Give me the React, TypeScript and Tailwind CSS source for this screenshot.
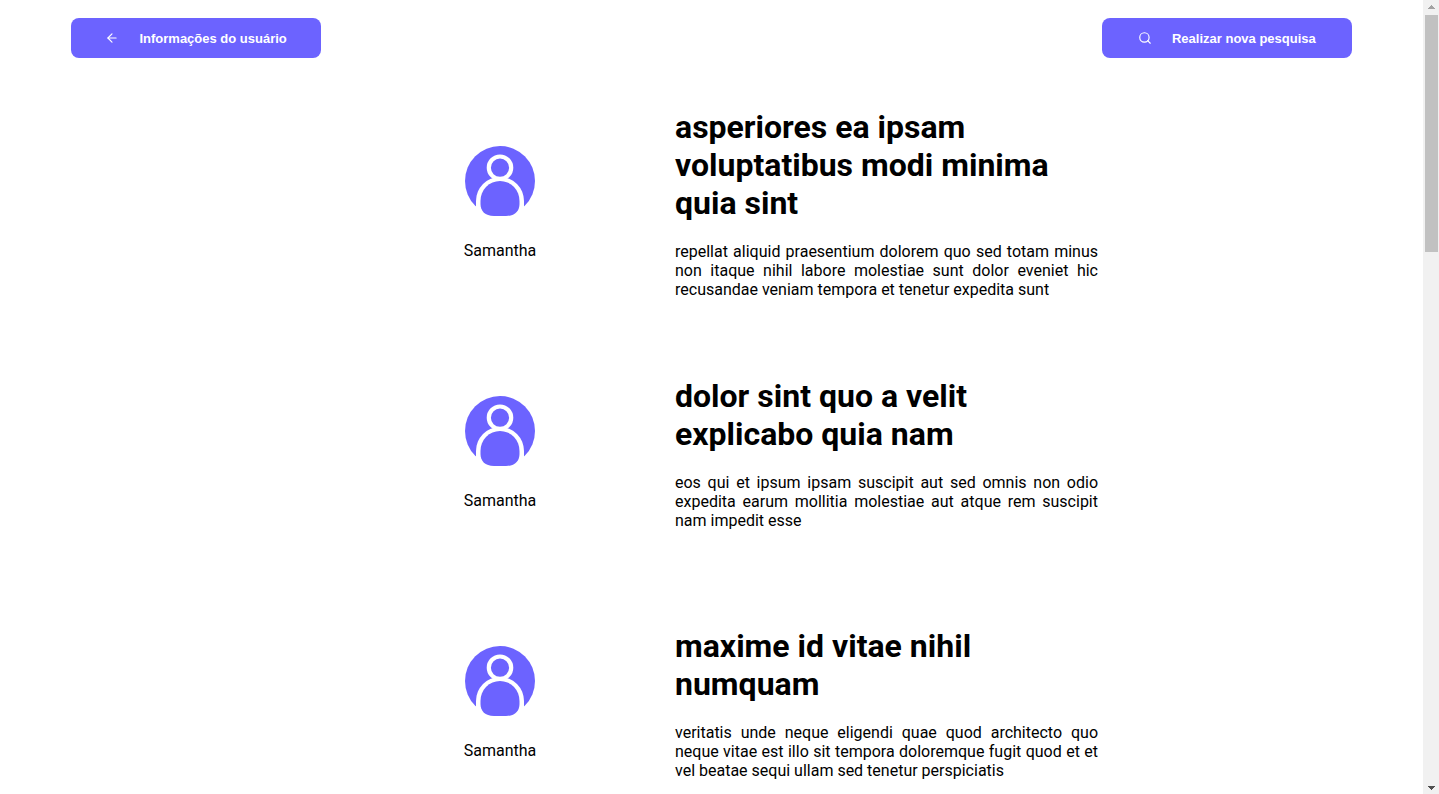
import type { ReactNode } from "react";
import { FiArrowLeft, FiSearch } from "react-icons/fi";

type Post = { title: string; author: string; body: string };

const posts: Post[] = [
  {
    title: "asperiores ea ipsam voluptatibus modi minima quia sint",
    author: "Samantha",
    body: "repellat aliquid praesentium dolorem quo sed totam minus non itaque nihil labore molestiae sunt dolor eveniet hic recusandae veniam tempora et tenetur expedita sunt",
  },
  {
    title: "dolor sint quo a velit explicabo quia nam",
    author: "Samantha",
    body: "eos qui et ipsum ipsam suscipit aut sed omnis non odio expedita earum mollitia molestiae aut atque rem suscipit nam impedit esse",
  },
  {
    title: "maxime id vitae nihil numquam",
    author: "Samantha",
    body: "veritatis unde neque eligendi quae quod architecto quo neque vitae est illo sit tempora doloremque fugit quod et et vel beatae sequi ullam sed tenetur perspiciatis",
  },
];

function HeaderButton({ icon, children }: { icon: ReactNode; children: ReactNode }) {
  return (
    <button
      type="button"
      className="flex h-10 w-[250px] items-center justify-center gap-5 rounded-lg bg-[#6c63ff] font-['Liberation_Sans',Arial,sans-serif] text-[13px] font-bold text-white"
    >
      {icon}
      <span>{children}</span>
    </button>
  );
}

function Avatar() {
  return (
    <svg viewBox="0 0 70 70" className="size-[70px]" aria-hidden="true">
      <circle cx="35" cy="35" r="35" fill="#6c63ff" />
      <path d="M11 61V55a24 24 0 0 1 48 0v6L56 71H14z" fill="#fff" />
      <path
        d="M15.500 55a19.500 20 0 0 1 39 0v3C54.500 65 50 70 41 70H29C20 70 15.500 65 15.500 58z"
        fill="#6c63ff"
      />
      <circle cx="35" cy="21.700" r="11.200" fill="#6c63ff" stroke="#fff" strokeWidth="4.200" />
    </svg>
  );
}

function PostRow({ post }: { post: Post }) {
  return (
    <article className="grid min-h-[250px] grid-cols-[350px_1fr] items-center">
      <div className="flex flex-col items-center gap-[25px]">
        <Avatar />
        <p>{post.author}</p>
      </div>
      <div className="flex flex-col gap-5">
        <h1 className="text-[32px] leading-[38px] font-bold">{post.title}</h1>
        <p className="text-justify">{post.body}</p>
      </div>
    </article>
  );
}

function ScrollTrack() {
  return (
    <div className="flex w-4 shrink-0 flex-col bg-[#f1f1f1]" aria-hidden="true">
      <svg viewBox="0 0 16 15" className="h-[15px] w-4" shapeRendering="crispEdges">
        <path d="M8 5h1v1h1v1h1v1h1v1H5V8h1V7h1V6h1z" fill="#a3a3a3" />
      </svg>
      <div className="mr-px ml-0.5 h-[237px] bg-[#c1c1c1]" />
      <svg viewBox="0 0 16 15" className="mt-auto h-[15px] w-4" shapeRendering="crispEdges">
        <path d="M5 7h7v1h-1v1h-1v1H9v1H8v-1H7V9H6V8H5z" fill="#505050" />
      </svg>
    </div>
  );
}

export default function App() {
  return (
    <div className="flex h-screen bg-white font-[Roboto,sans-serif] text-base leading-[19px] text-black">
      <div className="min-w-0 flex-1 overflow-y-auto [scrollbar-width:none]">
        <header className="flex justify-between px-[5%] pt-[18px] pb-5">
          <HeaderButton icon={<FiArrowLeft size={14} aria-hidden="true" />}>
            Informações do usuário
          </HeaderButton>
          <HeaderButton icon={<FiSearch size={14} aria-hidden="true" />}>
            Realizar nova pesquisa
          </HeaderButton>
        </header>
        <main className="mx-auto max-w-[773px]">
          {posts.map((post) => (
            <PostRow key={post.title} post={post} />
          ))}
        </main>
      </div>
      <ScrollTrack />
    </div>
  );
}
